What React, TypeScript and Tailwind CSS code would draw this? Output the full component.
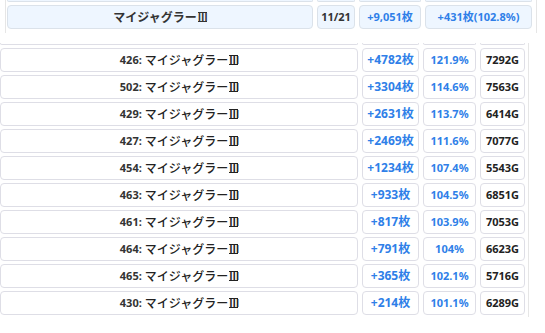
const rows = [
  { no: '426', diff: '+4782枚', rate: '121.9%', games: '7292G' },
  { no: '502', diff: '+3304枚', rate: '114.6%', games: '7563G' },
  { no: '429', diff: '+2631枚', rate: '113.7%', games: '6414G' },
  { no: '427', diff: '+2469枚', rate: '111.6%', games: '7077G' },
  { no: '454', diff: '+1234枚', rate: '107.4%', games: '5543G' },
  { no: '463', diff: '+933枚', rate: '104.5%', games: '6851G' },
  { no: '461', diff: '+817枚', rate: '103.9%', games: '7053G' },
  { no: '464', diff: '+791枚', rate: '104%', games: '6623G' },
  { no: '465', diff: '+365枚', rate: '102.1%', games: '5716G' },
  { no: '430', diff: '+214枚', rate: '101.1%', games: '6289G' },
];

const font = { fontFamily: '"Noto Sans", "Noto Sans CJK JP", sans-serif' };
const jp = { fontFamily: '"Noto Sans CJK JP", sans-serif' };

const topCell = 'flex items-center justify-center rounded-[4px] border border-[#dbe2ea] bg-[#eef6ff]';
const cell = 'flex items-center justify-center rounded-[4px] border border-[#dedee6] bg-white';
const stub = 'h-[2px] rounded-b-[4px] border border-t-0';

function Three() {
  return (
    <span className="ml-[1px] inline-block border-y-[1.5px] border-current text-[10px] font-bold leading-[8px] tracking-[-1px]">
      Ⅲ
    </span>
  );
}

function Name({ className }: { className?: string }) {
  return (
    <span className={`inline-flex items-center ${className ?? ''}`} style={jp}>
      マイジャグラー
      <Three />
    </span>
  );
}

export default function App() {
  return (
    <div className="w-[545px] h-[333px] overflow-hidden bg-white text-[11px] font-bold" style={font}>
      {/* summary table */}
      <div className="ml-[5px] flex w-[532px] flex-col gap-[3px] border-x border-[#e6e6e6] pb-[4px] pl-[1px]">
        <div className="flex gap-[4px]">
          <div className={`${stub} w-[306px] border-[#dbe2ea] bg-[#eef6ff]`} />
          <div className={`${stub} w-[38px] border-[#dbe2ea] bg-[#eef6ff]`} />
          <div className={`${stub} w-[62px] border-[#dbe2ea] bg-[#eef6ff]`} />
          <div className={`${stub} w-[107px] border-[#dbe2ea] bg-[#eef6ff]`} />
        </div>
        <div className="flex h-[24px] gap-[4px]">
          <div className={`${topCell} w-[306px] text-[12px] text-[#333]`}>
            <Name />
          </div>
          <div className={`${topCell} w-[38px] text-[#333]`}>11/21</div>
          <div className={`${topCell} w-[62px] text-[#2f7fe8]`}>+9,051枚</div>
          <div className={`${topCell} w-[107px] text-[#2f7fe8]`}>+431枚(102.8%)</div>
        </div>
      </div>

      {/* machine list */}
      <div className="mt-[10px] flex w-[529px] flex-col gap-[3px] border-r border-[#e6e6e6] pb-[2px]">
        <div className="flex gap-[4px]">
          <div className={`${stub} w-[358px] border-[#dedee6]`} />
          <div className={`${stub} w-[57px] border-[#dedee6]`} />
          <div className={`${stub} w-[53px] border-[#dedee6]`} />
          <div className={`${stub} w-[45px] border-[#dedee6]`} />
        </div>
        {rows.map((r) => (
          <div key={r.no} className="flex h-[24px] gap-[3px]">
            <div className={`${cell} mr-[1px] w-[358px] text-[#333]`}>
              {r.no}:
              <Name className="ml-[3px] text-[12px] font-medium text-[#222]" />
            </div>
            <div className={`${cell} mr-[1px] w-[57px] text-[12px] text-[#2f7fe8]`}>{r.diff}</div>
            <div className={`${cell} mr-[1px] w-[53px] text-[#2f7fe8]`}>{r.rate}</div>
            <div className={`${cell} w-[45px] text-[#222]`}>{r.games}</div>
          </div>
        ))}
      </div>
    </div>
  );
}
